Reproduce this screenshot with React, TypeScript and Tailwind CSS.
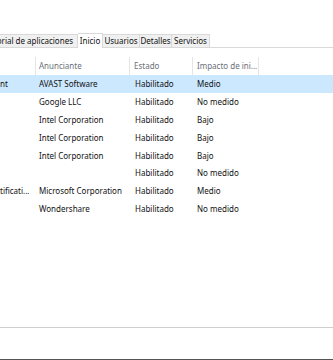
import React from "react";

const rows = [
  { n: "nt", a: "AVAST Software", e: "Habilitado", i: "Medio", sel: true },
  { n: "", a: "Google LLC", e: "Habilitado", i: "No medido" },
  { n: "", a: "Intel Corporation", e: "Habilitado", i: "Bajo" },
  { n: "", a: "Intel Corporation", e: "Habilitado", i: "Bajo" },
  { n: "", a: "Intel Corporation", e: "Habilitado", i: "Bajo" },
  { n: "", a: "", e: "Habilitado", i: "No medido" },
  { n: "tificati...", a: "Microsoft Corporation", e: "Habilitado", i: "Medio" },
  { n: "", a: "Wondershare", e: "Habilitado", i: "No medido" },
];

export default function App() {
  return (
    <div
      className="w-[333px] h-[360px] bg-white overflow-hidden flex flex-col text-[8px] text-[#111111] whitespace-nowrap"
      style={{ fontFamily: '"Noto Sans", "Open Sans", sans-serif' }}
    >
      <div className="h-[33px] shrink-0" />
      {/* tabs */}
      <div className="h-[15px] shrink-0 flex items-end border-b border-[#d9d9d9]">
        <div className="h-[13px] shrink-0 flex items-center justify-end overflow-hidden bg-[#f0f0f0] border border-b-0 border-[#d9d9d9] ml-[-40px] pr-[4px] w-[118px] leading-none">
          <span>Historial de aplicaciones</span>
        </div>
        <div className="h-[15px] shrink-0 flex items-center bg-white border border-b-0 border-l-0 border-[#d9d9d9] w-[25px] justify-center mb-[-1px] leading-none pb-[1px]">
          Inicio
        </div>
        <div className="h-[13px] shrink-0 flex items-center justify-center bg-[#f0f0f0] border border-b-0 border-l-0 border-[#d9d9d9] w-[37px] leading-none">
          Usuarios
        </div>
        <div className="h-[13px] shrink-0 flex items-center justify-center bg-[#f0f0f0] border border-b-0 border-l-0 border-[#d9d9d9] w-[32px] leading-none">
          Detalles
        </div>
        <div className="h-[13px] shrink-0 flex items-center justify-center bg-[#f0f0f0] border border-b-0 border-l-0 border-[#d9d9d9] w-[38px] leading-none">
          Servicios
        </div>
      </div>
      <div className="h-[9px] shrink-0" />
      {/* header */}
      <div className="h-[18px] shrink-0 flex text-[#6b7078]">
        <div className="w-[36px] shrink-0 border-r border-[#e5e5e5]" />
        <div className="w-[94px] shrink-0 border-r border-[#e5e5e5] flex items-center pl-[3px]">Anunciante</div>
        <div className="w-[63px] shrink-0 border-r border-[#e5e5e5] flex items-center pl-[4px]">Estado</div>
        <div className="w-[66px] shrink-0 border-r border-[#e5e5e5] flex items-center pl-[4px]">Impacto de ini...</div>
        <div className="flex-1" />
      </div>
      {/* rows */}
      <div className="flex flex-col">
        {rows.map((r, idx) => (
          <div
            key={idx}
            className={
              "h-[17.9px] shrink-0 flex items-center " +
              (r.sel ? "bg-[#cce8ff]" : "")
            }
          >
            <div className="w-[36px] shrink-0 overflow-hidden">{r.n}</div>
            <div className="w-[94px] shrink-0 pl-[3px]">{r.a}</div>
            <div className="w-[63px] shrink-0 pl-[5px]">{r.e}</div>
            <div className="w-[66px] shrink-0 pl-[4px]">{r.i}</div>
          </div>
        ))}
      </div>
      <div className="flex-1" />
      <div className="h-[1px] shrink-0 bg-[#cfcfcf]" />
      <div className="h-[31px] shrink-0" />
      <div className="h-[1px] shrink-0 bg-[#555555]" />
    </div>
  );
}
